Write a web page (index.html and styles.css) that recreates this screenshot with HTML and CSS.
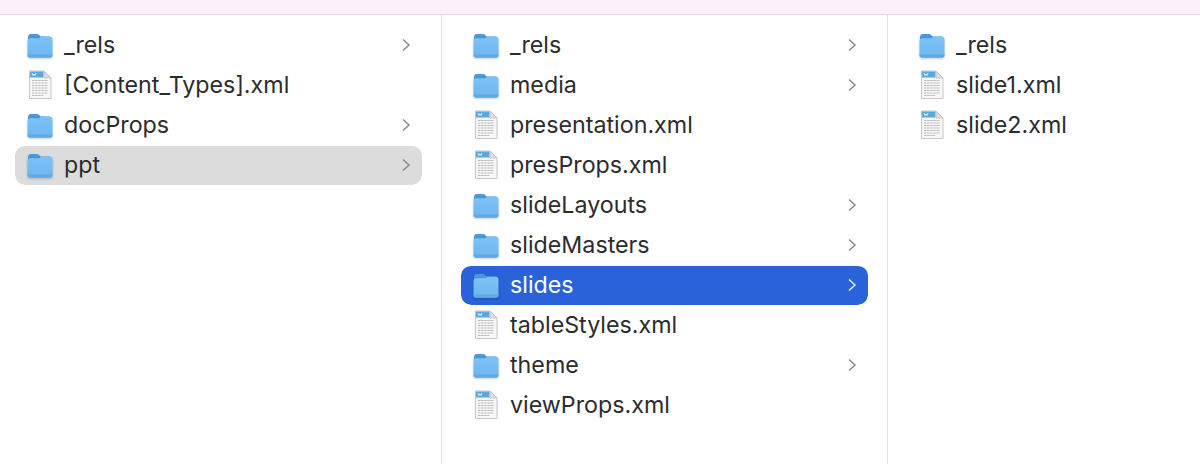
FILE: index.html
```html
<!DOCTYPE html>
<html lang="en">
<head>
<meta charset="utf-8">
<title>Finder columns</title>
<link rel="stylesheet" href="styles.css">
</head>
<body>
<svg class="defs" width="0" height="0" aria-hidden="true">
  <defs>
    <linearGradient id="fb" x1="0" y1="0" x2="0" y2="1">
      <stop offset="0" stop-color="#7cc4f7"/>
      <stop offset="1" stop-color="#6cb5f0"/>
    </linearGradient>
    <linearGradient id="ft" x1="0" y1="0" x2="0" y2="1">
      <stop offset="0" stop-color="#4a9ae0"/>
      <stop offset="1" stop-color="#3c8ad2"/>
    </linearGradient>
    <symbol id="folder" viewBox="0 0 28 26">
      <path d="M2 5.500C2 3 3 2 5 2h5.500c1.300 0 2 .4 2.800 1.200L14.500 4.500H23c2 0 3 1 3 3V12H2z" fill="url(#ft)"/>
      <path d="M1.500 9c0-1.900 1-2.800 2.800-2.800H12c1 0 1.500-.2 2.200-.8.500-.4 1-.6 1.800-.6h7.700c1.800 0 2.800 1 2.800 2.800v15.600c0 1.500-1 2.500-2.500 2.500H4c-1.500 0-2.500-1-2.500-2.500z" fill="url(#fb)"/>
      <path d="M1.500 22.500h25v.5c0 1.500-1 2.500-2.500 2.500H4c-1.500 0-2.500-1-2.500-2.500z" fill="#62a9e4"/>
    </symbol>
    <symbol id="doc" viewBox="0 0 24 30">
      <path d="M1.500 1h14.500l7 7v20.500H1.500z" fill="#f7f7f7" stroke="#c6c6c6" stroke-width="1"/>
      <path d="M2 1.500h13.500V7.500H2z" fill="#58a8e2"/>
      <path d="M4 3l1 2.500 1-1.500 1 1.500 1-2.500" fill="none" stroke="#fff" stroke-width=".8"/>
      <path d="M16 1.200v6.800h7z" fill="#dedede" stroke="#b8b8b8" stroke-width=".6"/>
      <path d="M4 10.500h16M4 13h16M4 15.500h16M4 18h16M4 20.500h16M4 23h16M4 25.500h11" stroke="#b9b9b9" stroke-width="1.100" stroke-dasharray="2.500 .6"/>
    </symbol>
    <symbol id="chev" viewBox="0 0 10 14">
      <path d="M2 1.500L8 7l-6 5.500" fill="none" stroke="currentColor" stroke-width="1.500"/>
    </symbol>
  </defs>
</svg>
<div class="topbar"></div>
<main class="columns">
  <section class="col col-a">
    <div class="row"><svg class="ic-folder"><use href="#folder"/></svg><span class="name">_rels</span><svg class="chev"><use href="#chev"/></svg></div>
    <div class="row"><svg class="ic-doc"><use href="#doc"/></svg><span class="name">[Content_Types].xml</span></div>
    <div class="row"><svg class="ic-folder"><use href="#folder"/></svg><span class="name">docProps</span><svg class="chev"><use href="#chev"/></svg></div>
    <div class="row row-inactive"><svg class="ic-folder"><use href="#folder"/></svg><span class="name">ppt</span><svg class="chev"><use href="#chev"/></svg></div>
  </section>
  <section class="col col-b">
    <div class="row"><svg class="ic-folder"><use href="#folder"/></svg><span class="name">_rels</span><svg class="chev"><use href="#chev"/></svg></div>
    <div class="row"><svg class="ic-folder"><use href="#folder"/></svg><span class="name">media</span><svg class="chev"><use href="#chev"/></svg></div>
    <div class="row"><svg class="ic-doc"><use href="#doc"/></svg><span class="name">presentation.xml</span></div>
    <div class="row"><svg class="ic-doc"><use href="#doc"/></svg><span class="name">presProps.xml</span></div>
    <div class="row"><svg class="ic-folder"><use href="#folder"/></svg><span class="name">slideLayouts</span><svg class="chev"><use href="#chev"/></svg></div>
    <div class="row"><svg class="ic-folder"><use href="#folder"/></svg><span class="name">slideMasters</span><svg class="chev"><use href="#chev"/></svg></div>
    <div class="row row-active"><svg class="ic-folder"><use href="#folder"/></svg><span class="name">slides</span><svg class="chev"><use href="#chev"/></svg></div>
    <div class="row"><svg class="ic-doc"><use href="#doc"/></svg><span class="name">tableStyles.xml</span></div>
    <div class="row"><svg class="ic-folder"><use href="#folder"/></svg><span class="name">theme</span><svg class="chev"><use href="#chev"/></svg></div>
    <div class="row"><svg class="ic-doc"><use href="#doc"/></svg><span class="name">viewProps.xml</span></div>
  </section>
  <section class="col col-c">
    <div class="row"><svg class="ic-folder"><use href="#folder"/></svg><span class="name">_rels</span></div>
    <div class="row"><svg class="ic-doc"><use href="#doc"/></svg><span class="name">slide1.xml</span></div>
    <div class="row"><svg class="ic-doc"><use href="#doc"/></svg><span class="name">slide2.xml</span></div>
  </section>
</main>
</body>
</html>
```
FILE: styles.css
```css
html, body {
  margin: 0;
  padding: 0;
  height: 464px;
  overflow: hidden;
  background: #fff;
}
body {
  font-family: "Inter", "Liberation Sans", sans-serif;
  font-size: 23.25px;
  color: #2c2c2c;
}
.defs {
  display: block;
  height: 0;
}
.topbar {
  height: 14px;
  background: #fbf1fa;
  border-bottom: 1px solid #e2dce2;
}
.columns {
  display: grid;
  grid-template-columns: 442px 446px 1fr;
  height: 449px;
}
.col {
  padding-top: 10px;
  box-sizing: border-box;
  border-right: 1px solid #e1e1e1;
}
.col-a {
  padding-left: 15px;
  padding-right: 19px;
}
.col-b {
  padding-left: 19px;
  padding-right: 19px;
}
.col-c {
  padding-left: 19px;
  padding-right: 19px;
  border-right: 0;
}
.row {
  display: flex;
  align-items: center;
  height: 40px;
  padding: 0 12px;
  border-radius: 10px;
  box-sizing: border-box;
}
.row-inactive,
.row-active {
  border-top: 1px solid transparent;
  padding-bottom: 1px;
  background-clip: padding-box;
}
.row-inactive {
  background-color: #dcdcdc;
}
.row-active {
  background-color: #2a62d9;
  color: #fff;
}
.ic-folder {
  width: 28px;
  height: 26px;
  margin-left: -1px;
  margin-right: 10px;
  flex: none;
  filter: blur(.3px) drop-shadow(0 1px 1px rgba(0, 0, 0, .2));
}
.ic-doc {
  width: 24px;
  height: 30px;
  margin-left: 1px;
  margin-right: 12px;
  flex: none;
  filter: blur(.35px);
}
.name {
  flex: 1;
  margin-top: -2px;
  white-space: nowrap;
}
.chev {
  width: 10px;
  height: 14px;
  flex: none;
  margin-right: -1px;
  color: #8a8a8a;
}
.row-active .chev {
  color: #e6ecfb;
}
```
